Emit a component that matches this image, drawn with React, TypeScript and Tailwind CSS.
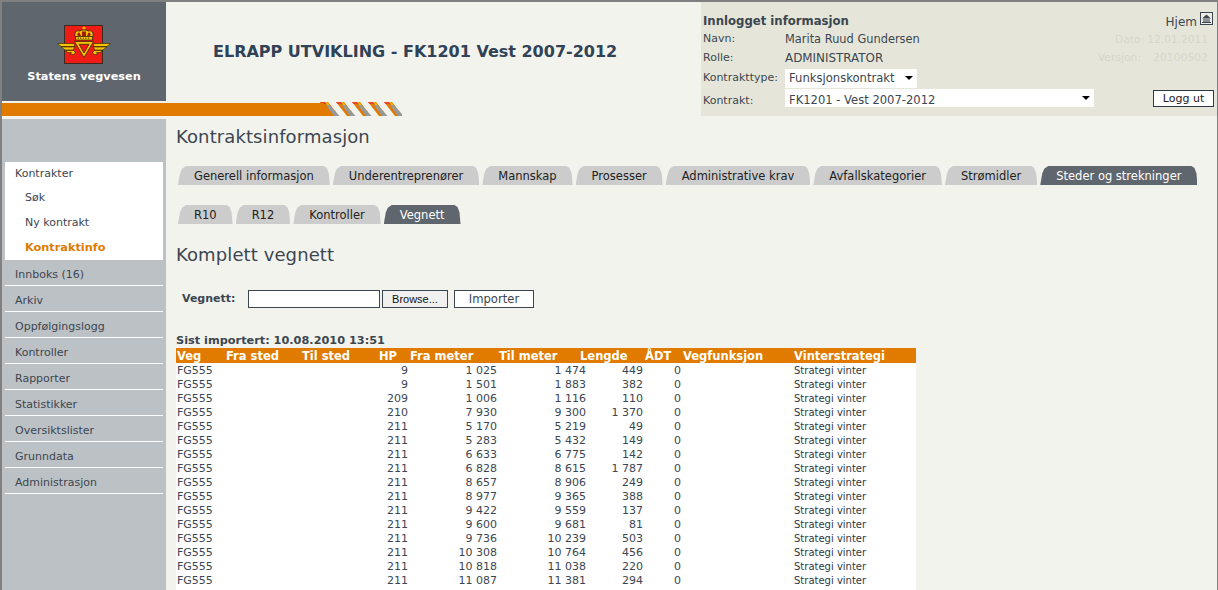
const FONT = "font-['DejaVu_Sans',Verdana,sans-serif]";

const topTabs = ["Generell informasjon", "Underentreprenører", "Mannskap", "Prosesser", "Administrative krav", "Avfallskategorier", "Strømidler", "Steder og strekninger"];
const subTabs = ["R10", "R12", "Kontroller", "Vegnett"];
const menu = ["Innboks (16)", "Arkiv", "Oppfølgingslogg", "Kontroller", "Rapporter", "Statistikker", "Oversiktslister", "Grunndata", "Administrasjon"];
const rows = [
  ["9", "1 025", "1 474", "449"],
  ["9", "1 501", "1 883", "382"],
  ["209", "1 006", "1 116", "110"],
  ["210", "7 930", "9 300", "1 370"],
  ["211", "5 170", "5 219", "49"],
  ["211", "5 283", "5 432", "149"],
  ["211", "6 633", "6 775", "142"],
  ["211", "6 828", "8 615", "1 787"],
  ["211", "8 657", "8 906", "249"],
  ["211", "8 977", "9 365", "388"],
  ["211", "9 422", "9 559", "137"],
  ["211", "9 600", "9 681", "81"],
  ["211", "9 736", "10 239", "503"],
  ["211", "10 308", "10 764", "456"],
  ["211", "10 818", "11 038", "220"],
  ["211", "11 087", "11 381", "294"],
];

function Logo() {
  const D = "#2a1c10";
  const Y = "#f5c400";
  const wing = (
    <g fill={Y} stroke={D} strokeWidth="0.6">
      <path d="M0.500 18.500H17l1 3H4z" />
      <path d="M4 22h14l-2 3H8z" />
      <path d="M9 25.500h8l1.500 2.500-2 1.500h-3l1-2h-4z" />
    </g>
  );
  return (
    <svg width="54" height="40" viewBox="0 0 54 40" className="block">
      <rect x="7.500" y="0.500" width="38" height="38" fill="#ee1c14" stroke="#3a2a20" />
      <path d="M27 1.500v4M25.200 3.200h3.600" stroke={Y} strokeWidth="1.200" />
      <path d="M18.500 12c-2-4 1-7 4-6 1.500-1.500 7.500-1.500 9 0 3-1 6 2 4 6z" fill={Y} stroke={D} strokeWidth="0.8" />
      <path d="M21 11c-1.500-2 0-3.500 1.500-3.500L24 11zM25 11V6.500h4V11zM30 11l1.500-3.500c1.500 0 3 1.500 1.500 3.500z" fill="#a01c10" />
      <rect x="18.500" y="11.500" width="17" height="3.500" fill={Y} stroke={D} strokeWidth="0.7" />
      <path d="M20.500 13.200h13" stroke={D} strokeWidth="0.9" strokeDasharray="1.200 1.400" />
      {wing}
      <g transform="matrix(-1 0 0 1 54 0)">{wing}</g>
      <path d="M17.500 16.500h19L27 32.500z" fill={Y} stroke={D} strokeWidth="0.7" />
      <path d="M22 19.300h10L27 28z" fill="#ee1c14" stroke={D} strokeWidth="0.7" />
    </svg>
  );
}

function Stripes() {
  const xs = [0, 16, 32, 48, 64];
  return (
    <svg width="84" height="14" viewBox="0 0 84 14" className="block shrink-0">
      {xs.map((x) => (
        <g key={x}>
          <path d={`M${x + 2} 0h8l11 14H${x + 13}z`} fill="#e07b00" />
          <path d={`M${x + 8} 3h3.500L${x + 21.500} 14h-5.500z`} fill="#96999b" />
          <path d={`M${x + 2} 0h7l1.500 2h-7z`} fill="#e8452a" />
          <path d={`M${x + 7} 0h2l2.500 3h-2z`} fill="#f5c400" />
        </g>
      ))}
      <path d="M0 1h5l10 13H0z" fill="#e07b00" />
    </svg>
  );
}

function Caret() {
  return (
    <svg width="8" height="4" viewBox="0 0 8 4" className="block shrink-0">
      <path d="M0 0h8L4 4z" fill="#000" />
    </svg>
  );
}

function HomeIcon() {
  return (
    <svg width="13" height="13" viewBox="0 0 13 13" className="block">
      <rect x="0.500" y="0.500" width="12" height="12" fill="#eeeee6" stroke="#3c4650" />
      <path d="M6.500 2.500 11 6.500H2z" fill="#3c4650" />
      <rect x="3" y="7" width="7" height="3" fill="#8b9198" />
      <path d="M2 10.500h9" stroke="#3c4650" />
    </svg>
  );
}

function Tab({ label, active }: { label: string; active: boolean }) {
  return (
    <div
      className={
        "h-[19px] px-4 flex items-center [clip-path:polygon(0_100%,2px_40%,4px_15%,8px_0,calc(100%-6px)_0,calc(100%-3px)_10%,calc(100%-1px)_40%,100%_100%)] text-[11.5px] whitespace-nowrap " +
        (active ? "bg-[#5f666d] text-white" : "bg-[#cccccc] text-[#222222]")
      }
    >
      {label}
    </div>
  );
}

export default function App() {
  return (
    <div className={`${FONT} w-[1218px] h-[590px] overflow-hidden bg-[#f3f3ee] border-t-2 border-l-2 border-r-1 border-[#808080] text-[11px] leading-[14px] text-[#3c4650]`}>
      <div className="flex h-[117px]">
        <div className="w-[699px] shrink-0">
          <div className="flex h-[99px]">
            <div className="w-[164px] shrink-0 bg-[#5f666d] flex flex-col items-center pt-[23px]">
              <Logo />
              <div className="mt-[5px] text-[11.3px] leading-[14px] font-bold text-white">Statens vegvesen</div>
            </div>
            <div className="pl-[47px] pt-[40px] text-[16px] leading-[20px] font-semibold text-[#2f4256] whitespace-nowrap">
              ELRAPP UTVIKLING - FK1201 Vest 2007-2012
            </div>
          </div>
          <div className="flex mt-[1px] h-[14px]">
            <div className="w-[316px] h-[13px] mt-[1px] bg-[#e07b00]" />
            <Stripes />
          </div>
        </div>
        <div className="w-[516px] h-[114px] bg-[#e5e6d9] pl-[2px] pr-[3px] pt-[10px]">
          <div className="flex justify-between h-[17px]">
            <div className="font-bold pt-[2px] text-[11.7px]">Innlogget informasjon</div>
            <div className="flex items-start gap-[3px] pr-[1px]">
              <span className="pt-[3px] text-[12px]">Hjem</span>
              <HomeIcon />
            </div>
          </div>
          <div className="flex h-[19px] items-center">
            <div className="w-[82px]">Navn:</div>
            <div className="flex-1 text-[11.4px]">Marita Ruud Gundersen</div>
            <div className="text-[#d6d7ca] pr-[6px] text-[10.6px]">Dato: 12.01.2011</div>
          </div>
          <div className="flex h-[19px] items-center">
            <div className="w-[82px]">Rolle:</div>
            <div className="flex-1 text-[11.9px]">ADMINISTRATOR</div>
            <div className="text-[#d6d7ca] pr-[6px] flex gap-[12px] text-[10.8px]">
              <span>Versjon:</span>
              <span>20100502</span>
            </div>
          </div>
          <div className="flex h-[20px] items-center mt-[1px]">
            <div className="w-[82px]">Kontrakttype:</div>
            <div className="w-[132px] h-[19px] bg-white flex items-center justify-between pl-[4px] pr-[4px] text-[11.6px]">
              <span>Funksjonskontrakt</span>
              <Caret />
            </div>
          </div>
          <div className="flex h-[20px] items-center">
            <div className="w-[82px] pt-[6px]">Kontrakt:</div>
            <div className="w-[309px] h-[18px] bg-white flex items-center justify-between pl-[4px] pr-[4px] text-[11.55px]">
              <span className="pt-[4px]">FK1201 - Vest 2007-2012</span>
              <Caret />
            </div>
            <div className="ml-auto mt-[1px] w-[61px] h-[17px] bg-white border border-[#2f3a44] flex items-center justify-center text-[#222222]">Logg ut</div>
          </div>
        </div>
      </div>

      <div className="flex">
        <div className="w-[164px] h-[480px] shrink-0 bg-[#bcc1c5] pt-[43px] px-[3px]">
          <div className="bg-white h-[98px] pl-[10px] pt-[5px]">
            <div>Kontrakter</div>
            <div className="pl-[10px] mt-[10px]">Søk</div>
            <div className="pl-[10px] mt-[11px]">Ny kontrakt</div>
            <div className="pl-[10px] mt-[11px] font-bold text-[11.3px] text-[#e07b00]">Kontraktinfo</div>
          </div>
          {menu.map((m) => (
            <div key={m} className="h-[26px] pl-[10px] pt-[8px] border-b border-white">{m}</div>
          ))}
        </div>

        <div className="pl-[10px] flex-1 min-w-0">
          <div className="text-[18px] leading-[22px] mt-[7px] tracking-[0.1px]">Kontraktsinformasjon</div>
          <div className="flex gap-[3px] pl-[2px] mt-[18px]">
            {topTabs.map((t, i) => (
              <Tab key={t} label={t} active={i === topTabs.length - 1} />
            ))}
          </div>
          <div className="flex gap-[3px] pl-[2px] mt-[20px]">
            {subTabs.map((t, i) => (
              <Tab key={t} label={t} active={i === subTabs.length - 1} />
            ))}
          </div>
          <div className="text-[18px] leading-[22px] mt-[20px] tracking-[0.1px]">Komplett vegnett</div>
          <div className="flex items-center h-[18px] mt-[24px] pl-[6px]">
            <div className="w-[66px] font-bold">Vegnett:</div>
            <div className="w-[132px] h-[18px] bg-white border border-[#3c4650]" />
            <div className="ml-[2px] w-[66px] h-[18px] bg-[#f0f0f0] border border-[#3c4650] flex items-center justify-center font-['Liberation_Sans',sans-serif] text-[11px] text-[#111111]">Browse...</div>
            <div className="ml-[6px] w-[80px] h-[18px] bg-white border border-[#3c4650] flex items-center justify-center text-[11.6px]">Importer</div>
          </div>
          <div className="font-bold mt-[26px] h-[14px] text-[11.3px]">Sist importert: 10.08.2010 13:51</div>
          <div className="w-[740px] h-[300px] bg-white">
            <div className="h-[15px] bg-[#e07b00] text-white font-bold text-[11.5px] grid grid-cols-[49px_76px_77px_31px_89px_81px_65px_38px_111px_1fr] items-center pl-[1px]">
              <div>Veg</div>
              <div>Fra sted</div>
              <div>Til sted</div>
              <div>HP</div>
              <div>Fra meter</div>
              <div>Til meter</div>
              <div>Lengde</div>
              <div>ÅDT</div>
              <div>Vegfunksjon</div>
              <div>Vinterstrategi</div>
            </div>
            <div className="pt-[1px]">
              {rows.map((r, i) => (
                <div key={i} className="h-[14px] grid grid-cols-[200px_31px_89px_89px_57px_38px_113px_1fr] items-center pl-[1px]">
                  <div>FG555</div>
                  <div className="text-right">{r[0]}</div>
                  <div className="text-right">{r[1]}</div>
                  <div className="text-right">{r[2]}</div>
                  <div className="text-right">{r[3]}</div>
                  <div className="text-right">0</div>
                  <div />
                  <div className="text-[10px] text-[#2f3a44]">Strategi vinter</div>
                </div>
              ))}
            </div>
          </div>
        </div>
      </div>
    </div>
  );
}
